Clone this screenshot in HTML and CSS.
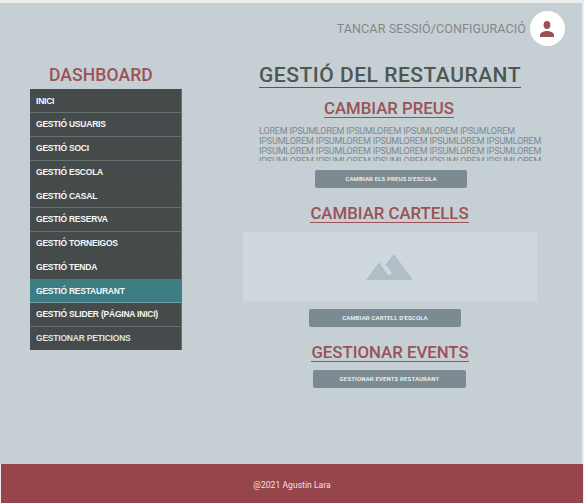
FILE: index.html
```html
<!DOCTYPE html>
<html lang="ca">
<head>
<meta charset="utf-8">
<title>Gestió del restaurant</title>
<link rel="stylesheet" href="styles.css">
</head>
<body>
<div class="page">
  <header class="topbar">
    <span class="session">TANCAR SESSIÓ/CONFIGURACIÓ</span>
    <span class="avatar">
      <svg viewBox="0 0 14 16" width="14" height="16"><ellipse cx="7" cy="4" rx="3.4" ry="3.9"/><path d="M0 16v-2.2C0 11.200 4.500 9.900 7 9.900s7 1.300 7 3.900V16z"/></svg>
    </span>
  </header>
  <div class="columns">
    <aside class="sidebar">
      <h2 class="dash"><span>DASHBOARD</span></h2>
      <nav class="menu">
        <a class="first">INICI</a>
        <a>GESTIÓ USUARIS</a>
        <a>GESTIÓ SOCI</a>
        <a>GESTIÓ ESCOLA</a>
        <a class="plain">GESTIÓ CASAL</a>
        <a>GESTIÓ RESERVA</a>
        <a>GESTIÓ TORNEIGOS</a>
        <a class="plain">GESTIÓ TENDA</a>
        <a class="active">GESTIÓ RESTAURANT</a>
        <a>GESTIÓ SLIDER (PÁGINA INICI)</a>
        <a class="last">GESTIONAR PETICIONS</a>
      </nav>
    </aside>
    <main class="content">
      <h1 class="title">GESTIÓ DEL RESTAURANT</h1>
      <h2 class="sub prices">CAMBIAR PREUS</h2>
      <p class="lorem">LOREM IPSUMLOREM IPSUMLOREM IPSUMLOREM IPSUMLOREM<br>IPSUMLOREM IPSUMLOREM IPSUMLOREM IPSUMLOREM IPSUMLOREM<br>IPSUMLOREM IPSUMLOREM IPSUMLOREM IPSUMLOREM IPSUMLOREM<br>IPSUMLOREM IPSUMLOREM IPSUMLOREM IPSUMLOREM IPSUMLOREM</p>
      <button class="btn btn-prices">CAMBIAR ELS PREUS D'ESCOLA</button>
      <h2 class="sub posters">CAMBIAR CARTELLS</h2>
      <div class="poster">
        <svg viewBox="0 0 47 26" width="47" height="26"><path d="M0 26 13 8.500 22.500 21.500 26 19 19.500 10.500 28 0 47 26z"/></svg>
      </div>
      <button class="btn btn-poster">CAMBIAR CARTELL D'ESCOLA</button>
      <h2 class="sub events">GESTIONAR EVENTS</h2>
      <button class="btn btn-events">GESTIONAR EVENTS RESTAURANT</button>
    </main>
  </div>
</div>
<footer class="footer"><span>@2021 Agustin Lara</span></footer>
</body>
</html>
```
FILE: styles.css
```css
* { box-sizing: border-box; }
body {
  margin: 0;
  padding-top: 3px;
  height: 503px;
  overflow: hidden;
  background: #ececec;
  font-family: Roboto, "Liberation Sans", sans-serif;
}
h1, h2, p { margin: 0; font-weight: 500; white-space: nowrap; }
.page { width: 582px; height: 461px; background: #c5cfd4; }
.topbar {
  display: flex;
  justify-content: flex-end;
  align-items: center;
  height: 51px;
  padding-right: 17px;
}
.session { margin-right: 4px; font-size: 12.5px; letter-spacing: 0.120px; color: #858787; }
.avatar {
  display: flex;
  align-items: center;
  justify-content: center;
  width: 35px;
  height: 35px;
  padding-right: 1px;
  border-radius: 50%;
  background: #fff;
}
.avatar svg { fill: #9b5256; }
.columns { display: flex; }
.sidebar { width: 152px; margin-left: 30px; }
.dash {
  height: 35px;
  padding: 11px 0 0 19px;
  font-size: 17.500px;
  letter-spacing: 0.120px;
  line-height: 20px;
  color: #9b5256;
}
.menu {
  display: grid;
  grid-template-rows: 23px 24px 24px 24px 23px 24px 24px 24px 23px 24px 24px;
  height: 261px;
  background: #454b4b;
}
.menu a {
  padding-left: 6px;
  border-right: 1px solid #687172;
  border-top: 1px solid #687172;
  font: bold 8.500px/22px "Liberation Sans", Arial, sans-serif;
  letter-spacing: -0.220px;
  color: #f5f7f7;
  white-space: nowrap;
}
.menu .first { border-top-color: #454b4b; }
.menu .plain { border-top-color: #454b4b; }
.menu .active { background: #3c7c82; }
.menu .active + a { border-top-color: #6fa0a5; }
.menu .last { color: #dde2e2; }
.content {
  display: flex;
  flex-direction: column;
  align-items: center;
  width: 294px;
  margin-left: 61px;
}
.title {
  height: 25px;
  margin-top: 9px;
  border-bottom: 1px solid #4f5751;
  font-size: 21px;
  letter-spacing: 0.520px;
  line-height: 24px;
  color: #4f5751;
}
.sub {
  height: 20px;
  border-bottom: 1px solid #9b5256;
  font-size: 16.800px;
  letter-spacing: 0;
  line-height: 21px;
  color: #9b5256;
}
.prices { margin-top: 10px; margin-right: 2px; }
.lorem {
  align-self: flex-start;
  height: 35px;
  margin: 8px 0 0 16px;
  overflow: hidden;
  font-size: 9px;
  font-weight: 400;
  letter-spacing: -0.165px;
  line-height: 10px;
  color: #7c8a90;
}
.btn {
  width: 152px;
  height: 18px;
  padding: 0;
  border: 0;
  border-radius: 2px;
  background: #7c8b91;
  font: 600 6px/18px Roboto, sans-serif;
  letter-spacing: 0.150px;
  color: #f2f5f6;
}
.btn-prices { margin-top: 9px; margin-left: 2px; }
.posters { margin-top: 15px; margin-right: 1px; }
.poster {
  display: flex;
  align-items: center;
  justify-content: center;
  width: 294px;
  height: 69px;
  margin-top: 9px;
  padding-right: 1px;
  background: #cfd8df;
}
.poster svg { fill: #b0bec5; }
.btn-poster { margin-top: 8px; margin-right: 10px; }
.events { margin-top: 15px; }
.btn-events { width: 153px; margin-top: 8px; margin-right: 1px; }
.footer {
  width: 582px;
  height: 39px;
  margin-left: 1px;
  background: #96454a;
  text-align: center;
  font-size: 8.500px;
  letter-spacing: 0.060px;
  line-height: 42px;
  color: #eee3e4;
}
```
